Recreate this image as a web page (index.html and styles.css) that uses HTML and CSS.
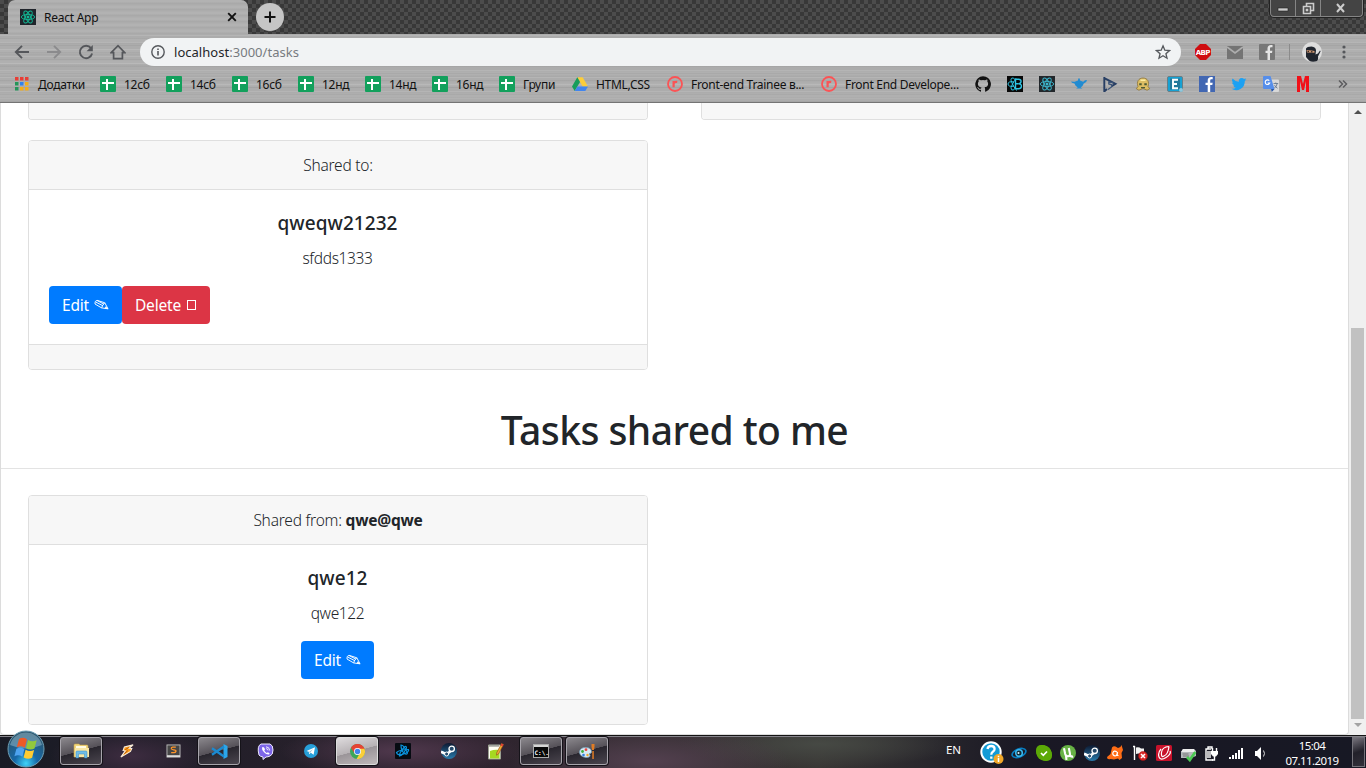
FILE: index.html
```html
<!DOCTYPE html>
<html lang="uk">
<head>
<meta charset="utf-8">
<title>React App</title>
<link rel="stylesheet" href="styles.css">
</head>
<body>
<svg class="defs" width="0" height="0" aria-hidden="true">
  <symbol id="sheet" viewBox="0 0 16 16"><rect width="16" height="16" rx="1" fill="#12a05c"/><path d="M6 3h2v11H6zM2 6h12v2H2z" fill="#fff"/></symbol>
  <symbol id="rabota" viewBox="0 0 16 16"><circle cx="8" cy="8" r="7" fill="none" stroke="#fb5355" stroke-width="1.8"/><path d="M6.600 11.200V5M6.600 8c.2-1.800 1.600-2.300 3.600-2" fill="none" stroke="#fb5355" stroke-width="2.200"/></symbol>
  <symbol id="atom" viewBox="0 0 16 16"><g fill="none" stroke="currentColor" stroke-width=".9"><ellipse cx="8" cy="8" rx="6.700" ry="2.600"/><ellipse cx="8" cy="8" rx="6.700" ry="2.600" transform="rotate(60 8 8)"/><ellipse cx="8" cy="8" rx="6.700" ry="2.600" transform="rotate(120 8 8)"/></g><circle cx="8" cy="8" r="1.500" fill="currentColor"/></symbol>
  <symbol id="pencil" viewBox="0 0 15 12"><path d="M3 1.300L10.800 3.800 14 9.800 7.600 8.900 1 5Q.4 2 3 1.300zM2 3.200L9 6.800M3.200 1.600L10 5.200M10.800 3.800Q8.300 6 7.600 8.900" fill="none" stroke="#fff" stroke-width=".95"/><path d="M11.800 7.200l2.700 3-4-.7z" fill="#fff"/></symbol>
  <symbol id="steam" viewBox="0 0 16 16"><circle cx="8" cy="8" r="8" fill="url(#steamg)"/><path d="M0 8.800l5.500 2.400 4-3" fill="none" stroke="#fff" stroke-width="2.600"/><circle cx="10.700" cy="5.800" r="2.700" fill="#24496a" stroke="#fff" stroke-width="1.300"/><circle cx="5.600" cy="11" r="2" fill="#24496a" stroke="#fff" stroke-width="1"/></symbol>
  <linearGradient id="steamg" x2="0" y2="1"><stop stop-color="#0d1830"/><stop offset="1" stop-color="#287bac"/></linearGradient>
</svg>
<header class="browser">
  <div class="tabstrip">
    <div class="tab">
      <svg class="favicon teal" width="16" height="16"><use href="#atom"/></svg>
      <span class="tab-title">React App</span>
      <svg width="10" height="10" viewBox="0 0 10 10"><path d="M1.200 1.200l7.600 7.600M8.800 1.200L1.200 8.800" stroke="#111" stroke-width="1.900"/></svg>
    </div>
    <div class="newtab"><svg width="28" height="28"><path d="M14 8.500v11M8.500 14h11" stroke="#111" stroke-width="2"/></svg></div>
    <div class="winbtns">
      <span class="wb min"><svg width="12" height="12"><rect x="1" y="6" width="10" height="3" fill="#ccc" stroke="#222" stroke-width=".6"/></svg></span>
      <span class="wb max"><svg width="13" height="13" fill="none" stroke="#ccc" stroke-width="1.600"><path d="M4.500 4V1.500h7v7H9M1.500 4.500h7v7h-7z"/><rect x="4.500" y="7.500" width="1" height="1"/></svg></span>
      <span class="wb cls"><svg width="12" height="11"><path d="M2 1l7 8M9 1L2 9" stroke="#ccc" stroke-width="2"/></svg></span>
    </div>
  </div>
  <div class="toolbar">
    <svg class="nav" width="16" height="16" viewBox="0 0 16 16"><path d="M15 8H2.500M8 1.800L1.800 8 8 14.200" fill="none" stroke="#55575b" stroke-width="1.900"/></svg>
    <svg class="nav" width="16" height="16" viewBox="0 0 16 16"><path d="M1 8h12.500M8 1.800L14.200 8 8 14.200" fill="none" stroke="#8b8b8d" stroke-width="1.900"/></svg>
    <svg class="nav" width="16" height="16" viewBox="0 0 16 16"><path d="M13 4.200A6.200 6.200 0 1 0 14.100 9.500" fill="none" stroke="#55575b" stroke-width="1.900"/><path d="M14.800 1v6.200H8.600z" fill="#55575b"/></svg>
    <svg class="nav" width="16" height="16" viewBox="0 0 16 16"><path d="M1.200 8.700L8 1.700l6.800 7H12.400v6H3.600v-6z" fill="none" stroke="#55575b" stroke-width="1.700"/></svg>
    <div class="omnibox">
      <svg width="14" height="14" viewBox="0 0 14 14"><circle cx="7" cy="7" r="6.200" fill="none" stroke="#55585c" stroke-width="1.400"/><path d="M6.200 6h1.600v4.500H6.200zM6.200 3.400h1.600V5H6.200z" fill="#55585c"/></svg>
      <span class="url">localhost<i>:3000/tasks</i></span>
      <svg width="16" height="16" viewBox="0 0 24 24"><path d="M12 2.800l2.700 6.500 7 .6-5.300 4.600 1.600 6.800-6-3.600-6 3.600 1.600-6.800L2.300 9.900l7-.6z" fill="none" stroke="#55585c" stroke-width="2"/></svg>
    </div>
    <svg class="ext" width="16" height="16" viewBox="0 0 16 16"><path d="M5 0h6l5 5v6l-5 5H5l-5-5V5z" fill="#cf0d10"/><text x="7.700" y="11" text-anchor="middle" class="abp">ABP</text></svg>
    <svg class="ext" width="16" height="13" viewBox="0 0 16 13"><path d="M0 0h16v13H0z" fill="#747474"/><path d="M0 1l8 6 8-6" fill="none" stroke="#aeaeae" stroke-width="1.700"/></svg>
    <svg class="ext" width="16" height="16" viewBox="0 0 16 16"><rect width="16" height="16" rx="1" fill="#777"/><path d="M13.500 3.200h-1.300c-1 0-1.200.6-1.200 1.500v2h2.400L13 9h-2v7H8.500V9h-2V6.700h2V4.500C8.500 2.300 9.800 1 12 1h1.500z" fill="#e5e5e5"/></svg>
    <span class="sep"></span>
    <svg class="avatar" width="20" height="20" viewBox="0 0 20 20"><circle cx="10" cy="10" r="10" fill="#ddd"/><path d="M4 6.500q1-2 5.500-2 4.500.5 4.500 4l-.5 4 2.500-1 2-3 .6.8-2.600 5.200q.5 3-1 4.500-5 1.600-8-.5L4 15z" fill="#20252e"/><path d="M4.500 8l5 .5 3 .5v1.800l-7.500-.3z" fill="#d39b76"/><path d="M5.500 9.300h1.500M9 9.800h1.500" stroke="#111"/></svg>
    <svg class="dots" width="4" height="14" fill="#55575b"><circle cx="2" cy="2" r="1.600"/><circle cx="2" cy="7" r="1.600"/><circle cx="2" cy="12" r="1.600"/></svg>
  </div>
  <nav class="bookmarks">
    <a class="bm apps"><svg width="14" height="14"><path d="M0 0h3.500v3.500H0zM5 0h3.500v3.500H5zM10 0h3.500v3.500H10z" fill="#e83d35"/><path d="M0 5h3.500v3.500H0zM0 10h3.500v3.500H0z" fill="#25955a"/><path d="M5 5h3.500v3.500H5z" fill="#2f82ed"/><path d="M5 10h3.500v3.500H5zM10 5h3.500v3.500H10zM10 10h3.500v3.500H10z" fill="#f4ad18"/></svg><span>Додатки</span></a>
    <a class="bm w66"><svg width="16" height="16"><use href="#sheet"/></svg><span>12сб</span></a>
    <a class="bm w66"><svg width="16" height="16"><use href="#sheet"/></svg><span>14сб</span></a>
    <a class="bm w66"><svg width="16" height="16"><use href="#sheet"/></svg><span>16сб</span></a>
    <a class="bm w67"><svg width="16" height="16"><use href="#sheet"/></svg><span>12нд</span></a>
    <a class="bm w67"><svg width="16" height="16"><use href="#sheet"/></svg><span>14нд</span></a>
    <a class="bm w67"><svg width="16" height="16"><use href="#sheet"/></svg><span>16нд</span></a>
    <a class="bm w73"><svg width="16" height="16"><use href="#sheet"/></svg><span>Групи</span></a>
    <a class="bm w95"><svg width="16" height="16" viewBox="0 0 16 16"><path d="M5.300 1.300h5.400L16 10.500h-5.300z" fill="#fccd3a"/><path d="M5.300 1.300L8 6l-5.300 9L0 10.500z" fill="#179d5b"/><path d="M5.400 10.500H16L13.300 15H2.700z" fill="#4285ee"/></svg><span>HTML,CSS</span></a>
    <a class="bm w154"><svg width="16" height="16"><use href="#rabota"/></svg><span>Front-end Trainee в...</span></a>
    <a class="bm w154"><svg width="16" height="16"><use href="#rabota"/></svg><span>Front End Develope...</span></a>
    <div class="icons-only">
      <svg viewBox="0 0 16 16"><path d="M8 .2a8 8 0 0 0-2.500 15.500c.4 0 .5-.2.500-.4v-1.500c-2.200.5-2.700-1-2.700-1-.4-.9-.9-1.200-.9-1.200-.7-.5.1-.5.1-.5.800.1 1.200.8 1.200.8.700 1.200 1.900.9 2.300.7.1-.5.300-.9.500-1.100C4.700 11.300 2.900 10.600 2.900 7.600c0-.9.300-1.600.8-2.100-.1-.2-.4-1 .1-2.100 0 0 .7-.2 2.200.8a7.500 7.500 0 0 1 4 0c1.500-1 2.200-.8 2.200-.8.500 1.100.2 1.900.1 2.100.500.500.8 1.200.8 2.100 0 3-1.800 3.700-3.600 3.900.3.300.6.800.6 1.500v2.300c0 .2.100.5.600.4A8 8 0 0 0 8 .2z" fill="#111"/></svg>
      <svg viewBox="0 0 16 16"><rect width="16" height="16" fill="#080808"/><g fill="none" stroke="#2fc5e4" stroke-width="1"><path d="M7 6Q1 5 1 8t6 2.200M8 3.500Q6 1 4.500 2.300T6 9t4 5.500M8 12.500Q6 15 4.500 13.700T5.500 8 9 2.300"/><path d="M8.500 3.300h3q2.700 0 2.500 2.200-.1 2-2.300 2.200 2.900.1 2.700 2.600-.1 2.500-2.900 2.500h-3zM8.500 7.700h3" stroke-width="1.400"/></g></svg>
      <svg class="reactbm" viewBox="0 0 16 16"><use href="#atom" width="16" height="16"/></svg>
      <svg viewBox="0 0 16 16"><path d="M0 5.500l3.500.2L7 4.500l.2-1.500L8 2l.8 1L9 4.500l3.200 1.300L14 4.300l2-.3-.8 2-2.500 1.500c-.6 2-1.700 3.200-3 3.900l1.800 1.100H5l1.800-1.100C5 10.500 4 9 3.500 7.500L1 6.800z" fill="#218bd1"/></svg>
      <svg viewBox="0 0 16 16"><path d="M1.300 1v14.500L4 13M1.300 2.200L12.500 7.800l-3.800 2.400" fill="none" stroke="#273e63" stroke-width="1.900"/><path d="M10.500 6.700L5.800 6v2l3 .8-.3 2.200L5 13.500" fill="none" stroke="#3d5578" stroke-width="1.300"/></svg>
      <svg viewBox="0 0 16 16"><path d="M3 10.500C1.300 6 3.500 2 8 2s6.700 4 5 8.500l1.700 2.200-2.600 1.500L8 12.500l-4.100 1.700-2.600-1.500z" fill="#dcbd63" stroke="#8b7438" stroke-width=".8"/><path d="M4.200 7.300h2.500v2H4.200zM9.300 7.300h2.500v2H9.300zM6 11h4v1.200H6z" fill="#4c5a35"/><path d="M5.500 4.200h5" stroke="#fff0a4" stroke-width="1.500"/></svg>
      <svg viewBox="0 0 16 16"><rect x=".5" y=".5" width="15" height="15" rx="1.500" fill="#16a1d3" stroke="#687e86"/><path d="M3 2.500h10v11H3z" fill="#24799b"/><path d="M11 3.700H6v8.600h5M6 8h4" fill="none" stroke="#fff" stroke-width="1.900"/><circle cx="14" cy="14" r="2" fill="#8fc8dc"/></svg>
      <svg viewBox="0 0 16 16"><rect width="16" height="16" fill="#4267b2"/><path d="M13.700 3.200h-1.300c-1 0-1.200.6-1.200 1.500v2h2.500L13.300 9h-2.100v7H8.700V9H6.500V6.700h2.200V4.500C8.700 2.300 10 1 12.200 1h1.500z" fill="#fff"/></svg>
      <svg viewBox="0 0 24 24"><path d="M23 5c-.8.400-1.700.6-2.600.7.900-.6 1.600-1.400 2-2.400-.9.500-1.800.9-2.900 1.100A4.600 4.600 0 0 0 11.700 8.600 13 13 0 0 1 2.300 3.900a4.600 4.600 0 0 0 1.400 6.100c-.7 0-1.400-.2-2-.5 0 2.200 1.500 4 3.600 4.500-.7.200-1.300.2-2 .1.600 1.800 2.200 3.100 4.200 3.200A9.200 9.200 0 0 1 .8 19.200 13 13 0 0 0 20.700 7.600C21.600 6.900 22.400 6 23 5z" fill="#1da1f2"/></svg>
      <svg viewBox="0 0 16 16"><path d="M7 3.500h8q1 0 1 1V15q0 1-1 1H8.500z" fill="#d8d8d8"/><path d="M1 0h6.500l4 13H1q-1 0-1-1V1q0-1 1-1z" fill="#568eea"/><path d="M8 13h3.500L8.800 16z" fill="#2857a8"/><path d="M6.300 4.700A2.300 2.300 0 1 0 6.700 7H4.600" fill="none" stroke="#fff" stroke-width="1.100"/><path d="M10.500 7.500h4.700M12.800 6.500v1M14.200 7.700q-.8 3-3 4.600M11.500 9.200q1 2 3 3" fill="none" stroke="#66788e" stroke-width=".9"/></svg>
      <svg viewBox="0 0 16 16"><path d="M2 16V0h4l2 8 2-8h4v16h-3V5L9 14H7L5 5v11z" fill="#f11018"/></svg>
    </div>
    <svg class="more" width="10" height="8"><path d="M1 .5L4.500 4 1 7.500M5 .5L8.500 4 5 7.500" fill="none" stroke="#5c5c5f" stroke-width="1.500"/></svg>
  </nav>
</header>

<div class="viewport">
  <main class="page">
    <section class="cards first">
      <div class="card tail"><div class="card-footer"></div></div>
      <div class="card tail"><div class="card-footer"></div></div>
      <article class="card">
        <div class="card-header">Shared to:</div>
        <div class="card-body">
          <h5>qweqw21232</h5>
          <p>sfdds1333</p>
          <div class="actions left"><button class="btn edit">Edit <svg width="15" height="12"><use href="#pencil"/></svg></button><button class="btn delete">Delete <span class="box"></span></button></div>
        </div>
        <div class="card-footer"></div>
      </article>
    </section>
    <h1>Tasks shared to me</h1>
    <section class="cards">
      <article class="card">
        <div class="card-header">Shared from: <b>qwe@qwe</b></div>
        <div class="card-body">
          <h5>qwe12</h5>
          <p>qwe122</p>
          <div class="actions"><button class="btn edit">Edit <svg width="15" height="12"><use href="#pencil"/></svg></button></div>
        </div>
        <div class="card-footer"></div>
      </article>
    </section>
  </main>
  <aside class="scrollbar"><i class="up"></i><i class="thumb"></i><i class="down"></i></aside>
</div>

<footer class="taskbar">
  <div class="orb"><svg width="38" height="38" viewBox="0 0 38 38"><defs><radialGradient id="orb" cx=".5" cy=".9" r=".8"><stop stop-color="#3fd3f8"/><stop offset=".4" stop-color="#1668a8"/><stop offset="1" stop-color="#2b566f"/></radialGradient></defs><circle cx="19" cy="19" r="18" fill="url(#orb)" stroke="#6f9fb5" stroke-width="1"/><path d="M3 15a16.500 16.500 0 0 1 32 0q-16 7-32 0z" fill="#b5d8e6" opacity=".4"/><path d="M12 9q4-2.500 8 .3l-2.200 8.400q-4-2.600-8-.4z" fill="#ec5a28"/><path d="M21 10q4 2.300 8.700.3l-2.200 8.200q-4 2-8.500-.3z" fill="#91c83d"/><path d="M9.400 18.700q4-2.200 8 .4l-2 7.600q-4-2.600-8-.5z" fill="#4ea3ef"/><path d="M18.600 19.700q4 2.300 8.500.3l-2 7.800q-4 2.200-8.500-.3z" fill="#fecb32"/></svg></div>
  <div class="tasks">
    <span class="task open"><svg width="17" height="16" viewBox="0 0 17 16"><path d="M1 2q0-1 1-1h4l1 1h7q1 0 1 1v11H1z" fill="#f2d77d" stroke="#c8a34c" stroke-width=".6"/><path d="M3 3h10v3H3z" fill="#fffbe3"/><path d="M2 5h14v9H2z" fill="#f8e6a4"/><path d="M3 15V9q0-1 1-1h9q1 0 1 1v6h-2.500v-4h-6v4z" fill="#70bce6" stroke="#338bc2" stroke-width=".5"/></svg></span>
    <span class="task"><svg width="14" height="14" viewBox="0 0 16 16"><path d="M15 1L5 3.500l-1.500 4 2.500.3L1 15l11-6.500 1.500-3.300-3-.2z" fill="#ff9d19" stroke="#f7eddc" stroke-width="1.200"/><path d="M10 4L6 6.500M9 7.500L5 11" stroke="#a14d0b"/></svg></span>
    <span class="task"><svg width="15" height="14" viewBox="0 0 16 15"><rect x="1" y="1" width="14" height="13" fill="#464646" stroke="#b9b9b9"/><path d="M1 12h14v2H1z" fill="#ddd"/><path d="M10.500 3.300H7q-1.500.3-1.300 1.700.2 1 2.500 1.200 2.600.3 2.500 1.500-.2 1.500-2 1.500H5.500" fill="none" stroke="#ff942a" stroke-width="1.400"/></svg></span>
    <span class="task open"><svg width="17" height="17" viewBox="0 0 17 17"><path d="M12.500 1L16.500 3v11l-4 2z" fill="#2ba7eb"/><path d="M1 5.300l12 8.200M1 11.700L13 3.500" stroke="#1b8ad0" stroke-width="2.300"/></svg></span>
    <span class="task"><svg width="17" height="17" viewBox="0 0 17 17"><path d="M4 1h9q3 1 3 6t-3 6q-2 1-4 1l-3 2.500V14q-3-.5-4-2Q-.3 3 4 1z" fill="#7d66e8" stroke="#eeeafe"/><path d="M5 4.500q-.5 2 2 4.700t4.800 2.300q1-.5.7-1.200l-1.600-1-1.200.8Q7.800 9 7.300 7.300l.8-1L7 4.500q-1-.8-2 0z" fill="#fff"/><path d="M9 3.800q3.500.2 3.700 3.700M9.200 5.600q1.600.2 1.800 1.800" fill="none" stroke="#fff" stroke-width=".9"/></svg></span>
    <span class="task"><svg width="14" height="14" viewBox="0 0 14 14"><circle cx="7" cy="7" r="7" fill="#279fd9"/><path d="M2.500 7l8.500-3.700-1.400 7.400-2.800-2-1.600 1.600-.4-2.600z" fill="#fff"/><path d="M5 8l4-3-3 4" fill="#9bc3da"/></svg></span>
    <span class="task open active"><svg width="15" height="15" viewBox="0 0 16 16"><circle cx="8" cy="8" r="8" fill="#3ba75a"/><path d="M1 4a8 8 0 0 1 14 0l.5 2H8L5 10z" fill="#e54335"/><path d="M8 5h7.400A8 8 0 0 1 7 16l4-7z" fill="#fbcf3a"/><circle cx="8" cy="8" r="3.700" fill="#fff"/><circle cx="8" cy="8" r="2.900" fill="#4285ec"/></svg></span>
    <span class="task"><svg width="16" height="16" viewBox="0 0 16 16"><rect width="16" height="16" rx="1" fill="#060b12"/><g fill="none" stroke="#0b93dd" stroke-width="1.200"><path d="M1.500 9.500Q5 6.500 13.500 6.500q1 2.500-5 4.500T1.500 9.500z"/><path d="M6 2q3 0 6.500 8-.5 2.500-3.500 0T6 2z"/><path d="M4.500 13Q4 10 9.500 4q2-1.500 2 1Q8.500 12 4.500 13z"/></g></svg></span>
    <span class="task"><svg width="16" height="16"><use href="#steam"/></svg></span>
    <span class="task"><svg width="17" height="17" viewBox="0 0 17 17"><path d="M1.500 2h12v14h-12z" fill="#fffef4" stroke="#9aa090"/><path d="M3 8q5-2 9.500-1v8.500H3z" fill="#a6d821"/><path d="M3 1v3M5 1v3M7 1v3M9 1v3M11 1v3" stroke="#777"/><path d="M16.500 1.500l-5 9.500-2 1.200.2-2.400L14.500.5z" fill="#f2ad32" stroke="#8e451f" stroke-width=".6"/><path d="M14.500.5l2 1-1 2-2-1z" fill="#df4034"/></svg></span>
    <span class="task open"><svg width="16" height="14" viewBox="0 0 16 14"><rect x=".5" y=".5" width="15" height="13" fill="#080808" stroke="#aaa"/><path d="M1 1h14v2H1z" fill="#d5d5d5"/><text x="1.500" y="10.500" class="cmd">C:\.</text></svg></span>
    <span class="task open"><svg width="17" height="17" viewBox="0 0 17 17"><path d="M6.500 4.500q6 0 6 4.500 0 1.500-2 1.500-.8.500.5 1.500.5 2.500-4 2.500Q.5 13.500.5 9q.5-4.500 6-4.500z" fill="#d8eaf5" stroke="#779fb8" stroke-width=".8"/><circle cx="3.500" cy="8.500" r="1.400" fill="#40ad42"/><circle cx="7" cy="6.700" r="1.400" fill="#e74840"/><circle cx="4.500" cy="12" r="1.300" fill="#347fdf"/><circle cx="8.500" cy="12" r="1.200" fill="#eaa52d"/><path d="M12.500 1h3v3l-.6 3h-1.800l-.6-3zM13.300 8h1.500v8h-1.500z" fill="#df7c25"/></svg></span>
  </div>
  <span class="lang">EN</span>
  <div class="tray">
    <svg class="help" width="24" height="24" viewBox="0 0 24 24"><circle cx="11" cy="11" r="9.700" fill="#139bd6" stroke="#fff" stroke-width="2"/><path d="M7.500 8q.4-3 3.700-3t3.400 3q0 1.500-1.800 2.700-1.500 1-1.500 3M11.300 15.500v2.300" fill="none" stroke="#fff" stroke-width="2.300"/><circle cx="18.500" cy="18" r="5" fill="#f2a828"/><path d="M18.500 14.700v1.500M18.500 17v4" stroke="#fff" stroke-width="1.500"/></svg>
    <svg class="i19" width="16" height="16" viewBox="0 0 16 16"><ellipse cx="8" cy="8" rx="7.200" ry="4" fill="none" stroke="#087dc0" stroke-width="1.700" transform="rotate(-22 8 8)"/><circle cx="8" cy="8" r="3.300" fill="#102936" stroke="#39b7ed" stroke-width="1.600"/><circle cx="7.500" cy="8" r="1" fill="#d8f5ff"/></svg>
    <svg class="i44" width="16" height="16" viewBox="0 0 16 16"><rect width="12" height="12" rx="5" fill="#5ca907"/><rect x="4" y="4" width="12" height="12" rx="5" fill="#5ca907"/><circle cx="8" cy="8" r="7.500" fill="#5ca907"/><path d="M5 8l2.300 2.300L11 6.500" fill="none" stroke="#fff" stroke-width="1.700"/></svg>
    <svg class="i69" width="16" height="16" viewBox="0 0 16 16"><circle cx="8" cy="8" r="8" fill="#67b245"/><path d="M4 3.300L5.200 9q.6 2.500 3 2.200 2.200-.3 1.700-2.800L8.800 3M10 10q1 2.200 3.200 1.500M6 11l.5 4" fill="none" stroke="#fff" stroke-width="2.100"/></svg>
    <svg class="i92" width="16" height="16"><use href="#steam"/></svg>
    <svg class="i115" width="16" height="16" viewBox="0 0 16 16"><path d="M5 2.500q1.500-2 3.500-1L11 3q3-.5 3.500-3l1.500 5-1.500 3 .5 5-2.500 2-1.500-1.500-4 1-3.500-.5Q0 15 0 12l3.500-3z" fill="#ff6d16"/><path d="M10 7q-3-2-4 .5T8 11q2 0 2.500-4l-.3 3.500h1.300" fill="none" stroke="#fff" stroke-width="1.200"/></svg>
    <svg class="i140" width="16" height="16" viewBox="0 0 16 16"><path d="M2.500 1v14M1 1.500h2" stroke="#fff" stroke-width="1.400"/><path d="M4 2.500q3-1 5 1h3v6H9q-2-1.500-5-.5z" fill="#f2f2f2"/><circle cx="11" cy="11" r="4.500" fill="#d82727" stroke="#9e1010" stroke-width=".5"/><path d="M9 9l4 4M13 9l-4 4" stroke="#fff" stroke-width="1.500"/></svg>
    <svg class="i164" width="16" height="16" viewBox="0 0 16 16"><rect width="16" height="16" rx="1.500" fill="#c7122b"/><path d="M13 1.500Q6 2 5.500 7.500T8 11q4-1.500 5-9.500M5 4Q1.500 8 3 12t7 .5 4-6.500" fill="none" stroke="#fff" stroke-width="1.200"/></svg>
    <svg class="i188" width="17" height="17" viewBox="0 0 17 17"><path d="M3 4h11l2 2v5l-5 2H1V7z" fill="#b4b8ba"/><path d="M3 4h11l1 3H1z" fill="#ededed"/><path d="M2.500 9h6M3 11h6" stroke="#777"/><path d="M7 12l2.800 3 5.500-8" fill="none" stroke="#4bc952" stroke-width="2.700"/></svg>
    <svg class="i211" width="15" height="17" viewBox="0 0 15 17"><path d="M7 4H2v11h7M4 3.500V2h4v2M4 6v7M6 6v7" fill="none" stroke="#fff" stroke-width="1.400"/><path d="M8.500 3v4M12.500 3v4M10.500 11v4H8" fill="none" stroke="#fff" stroke-width="1.400"/><path d="M7 6h7v3l-2 2.500H9L7 9z" fill="#fff"/></svg>
    <svg class="i237" width="15" height="13" fill="#fff"><path d="M0 10h2v2H0zM3 8h2v4H3zM6 6h2v6H6zM9 3h2v9H9zM12 1h2v11h-2z"/></svg>
    <svg class="i260" width="13" height="15" viewBox="0 0 13 15"><path d="M1 5h2l4-4v13l-4-4H1z" fill="#fff"/><path d="M9.500 4.500q2 3 0 6" fill="none" stroke="#ddd"/></svg>
  </div>
  <div class="clock"><span>15:04</span><span>07.11.2019</span></div>
  <div class="showdesk"></div>
</footer>
</body>
</html>
```
FILE: styles.css
```css
* { box-sizing: border-box; }
body { margin: 0; width: 1366px; height: 768px; overflow: hidden; display: flex; flex-direction: column; background: #fff; color: #212529; font-family: "Noto Sans", "Open Sans", sans-serif; }
svg { display: block; flex: none; }
.defs { position: absolute; }

.browser { flex: 0 0 103px; border-bottom: 1px solid #747474; color: #111;
  background: repeating-linear-gradient(180deg, rgba(255,255,255,.11) 0 1px, transparent 1px 3px, rgba(0,0,0,.04) 3px 4px, transparent 4px 7px), repeating-linear-gradient(180deg, #acacac 0 5px, #b0b0b0 6px 9px, #a9a9a9 10px 11px); }
.tabstrip { height: 34px; display: flex; align-items: flex-start; background-color: #444; background-image: conic-gradient(#383838 25%, #4c4c4c 0 50%, #383838 0 75%, #4c4c4c 0); background-size: 8px 8px; }
.tab { width: 240px; height: 34px; margin-left: 8px; padding: 0 11px 0 12px; display: flex; align-items: center; border-radius: 7px 7px 0 0; background: repeating-linear-gradient(180deg, #b2b2b2 0 2px, #a9a9a9 3px 4px, #afafaf 5px 6px); }
.favicon { background: #20242b; }
.teal { color: #12b995; }
.tab-title { margin-left: 8px; font-size: 12px; letter-spacing: -.25px; flex: 1; }
.newtab { width: 28px; height: 28px; border-radius: 50%; background: #c5c5c5; margin: 3px 0 0 8px; }
.winbtns { margin: 0 3px 0 auto; height: 17px; width: 93px; display: flex; border: 1px solid #858585; border-top: 0; border-radius: 0 0 4px 4px; background: #444; box-shadow: 0 0 0 1px #222; }
.wb { display: flex; align-items: center; justify-content: center; height: 16px; }
.min { width: 24px; }
.max { width: 26px; border-left: 1px solid #858585; border-right: 1px solid #858585; }
.cls { flex: 1; padding-right: 2px; }

.toolbar { height: 36px; padding: 4px 0 0 14px; display: flex; align-items: center; }
.toolbar > svg { margin-top: -4px; }
.nav { margin-right: 16px; }
.omnibox { width: 1041px; height: 28px; border-radius: 14px; background: #f1f3f4; display: flex; align-items: center; padding: 0 10px 0 11px; margin: -4px 14px 0 -2px; }
.url { font-size: 13px; color: #242629; margin-left: 9px; flex: 1; letter-spacing: .03px; }
.url i { font-style: normal; color: #777b80; }
.ext { margin-right: 16px; }
.abp { font: bold 7px "DejaVu Sans", sans-serif; fill: #fff; letter-spacing: -.7px; }
.sep { width: 1px; height: 16px; margin: -4px 12px 0 -2px; background: #8b8b8b; }
.dots { margin-left: 20px; }

.bookmarks { height: 32px; padding: 0 0 4px 15px; display: flex; align-items: center; font-size: 12px; letter-spacing: -.29px; }
.bm { display: flex; align-items: center; white-space: nowrap; flex: none; }
.bm span { margin-left: 8px; }
.apps { width: 85px; }
.apps span { margin-left: 9px; }
.w66 { width: 66px; }
.w67 { width: 67px; }
.w73 { width: 73px; }
.w95 { width: 95px; }
.w154 { width: 154px; }
.icons-only { display: flex; gap: 16px; }
.icons-only svg { width: 16px; height: 16px; }
.reactbm { background: #22272b; color: #3db7ce; }
.more { margin-left: 27px; }

.viewport { flex: 0 0 632px; display: flex; background: #f0f0f0; overflow: hidden; }
.page { width: 1349px; border: 1px solid #dcdcdc; border-top: 0; border-radius: 0 0 4px 4px; background: #fff; overflow: hidden; }
.cards { display: grid; grid-template-columns: 620px 620px; column-gap: 53px; row-gap: 20px; padding-left: 27px; }
.card { border: 1px solid #dfdfdf; border-radius: 4px; background: #fff; overflow: hidden; text-align: center; font-size: 15.5px; font-weight: 350; line-height: 24px; letter-spacing: -.22px; }
.tail { height: 17px; border-top: 0; border-radius: 0 0 4px 4px; }
.card-header { height: 49px; padding: 12px 20px; background: #f7f7f7; border-bottom: 1px solid #dfdfdf; }
.card-body { height: 154px; padding: 20px 21px 20px 20px; }
.card-footer { height: 25px; background: #f7f7f7; border-top: 1px solid #dfdfdf; }
.tail .card-footer { border-top: 0; }
h5 { margin: 1px 0 11px; font-size: 19px; font-weight: 500; line-height: 24px; letter-spacing: .05px; }
p { margin: 0 0 16px; line-height: 24px; letter-spacing: -.35px; }
.actions { display: flex; justify-content: center; }
.left { justify-content: flex-start; }
.btn { height: 38px; padding: 0 13px; display: flex; align-items: center; border: 0; border-radius: 4px; color: #fff; font: 15.500px/24px "Noto Sans", sans-serif; letter-spacing: -.2px; white-space: nowrap; }
.edit { width: 73px; background: #007bff; justify-content: space-between; }
.delete { width: 88px; background: #dc3545; justify-content: space-between; }
.box { width: 9px; height: 10px; border: 1px solid #fff; margin-right: 1px; }
h1 { margin: 32px 0 26px; height: 67px; border-bottom: 1px solid #e3e3e3; padding-top: 4px; text-align: center; font-size: 39px; font-weight: 500; line-height: 48px; letter-spacing: -.55px; white-space: nowrap; }

.scrollbar { width: 17px; display: flex; flex-direction: column; align-items: center; }
.up { border: 4px solid transparent; border-top: 0; border-bottom-color: #505050; margin-top: 7px; }
.thumb { width: 13px; height: 391px; background: #c1c1c1; margin: 214px 0 0; }
.down { border: 4px solid transparent; border-bottom: 0; border-top-color: #a3a3a3; margin-top: 4px; }

.taskbar { height: 33px; display: flex; border-top: 1px solid #141414; box-shadow: inset 0 1px #85838a; color: #fff;
  background: radial-gradient(ellipse 80px 28px at 130px 20px, #3d2c40, transparent), radial-gradient(ellipse 120px 25px at 400px 15px, #50384d, transparent), radial-gradient(ellipse 140px 35px at 650px 25px, #53404f, transparent), radial-gradient(ellipse 140px 24px at 820px 8px, #464944, transparent), linear-gradient(90deg, #191b25, #2e232e 35%, #393735 60%, #1a1824 75%, #171824); }
.orb { width: 60px; padding: 0 0 0 7px; margin-top: -6px; }
.tasks { display: flex; gap: 4px; padding-top: 1px; }
.task { width: 42px; height: 28px; display: flex; align-items: center; justify-content: center; border: 1px solid transparent; border-radius: 3px; }
.open { border-color: #a7a4ab; background: linear-gradient(165deg, #8b888d 0, #555158 49%, #29262e 50%, #4a454e); box-shadow: 0 0 0 1px #151319; }
.active { background: linear-gradient(165deg, #dedbdd, #b6b1b4 49%, #9a9498 50%, #bfb9bb); border-color: #ddd; }
.cmd { font: bold 6px "DejaVu Sans Mono", monospace; fill: #fff; }
.lang { width: 33px; margin-left: 338px; padding-top: 6px; font-size: 11.5px; line-height: 15px; letter-spacing: -.2px; }
.tray { height: 32px; display: flex; align-items: center; padding-top: 2px; }
.help { margin: -1px 0 0 1px; }
.i19 { margin-left: 7px; }
.i44 { margin-left: 9px; }
.i69 { margin-left: 8px; }
.i92 { margin-left: 8px; }
.i115 { margin-left: 7px; }
.i140 { margin-left: 9px; }
.i164 { margin-left: 8px; }
.i188 { margin-left: 8px; }
.i211 { margin-left: 7px; }
.i237 { margin-left: 10px; }
.i260 { margin-left: 10px; }
.clock { width: 56px; margin: 2px 12px 0 auto; display: flex; flex-direction: column; align-items: center; font-size: 11.5px; line-height: 15px; }
.clock span { letter-spacing: -.6px; white-space: nowrap; }
.showdesk { width: 13px; height: 30px; margin: 1px 1px 0 0; border: 1px solid #74737a; background: linear-gradient(160deg, #77747d, #22212a 50%, #32303a); }
```
